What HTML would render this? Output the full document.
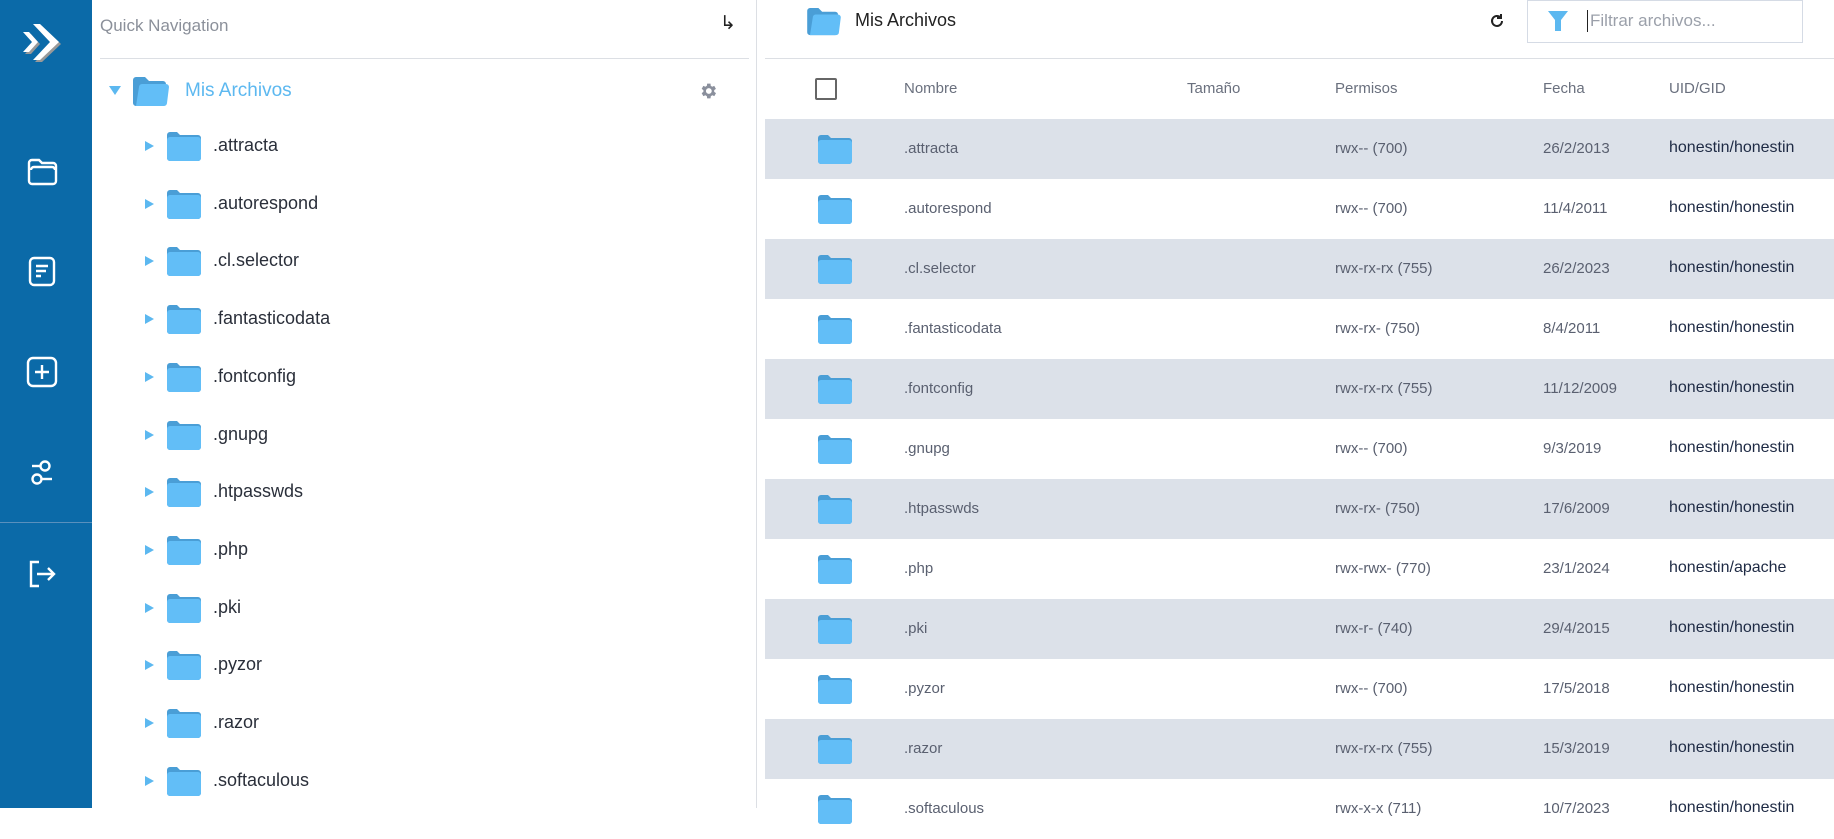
<!DOCTYPE html>
<html><head><meta charset="utf-8"><style>
*{margin:0;padding:0;box-sizing:border-box}
body{width:1834px;height:808px;overflow:hidden;background:#fff;font-family:"Liberation Sans",sans-serif;position:relative}
.sb{position:absolute;left:0;top:0;width:92px;height:808px;background:#0b6aa8}
.sb svg{position:absolute}
.abs{position:absolute}
.tree .row{position:absolute;left:0;height:30px}
.tri{position:absolute;width:0;height:0;border-top:5px solid transparent;border-bottom:5px solid transparent;border-left:9px solid #5cb8f0}
.fold{position:absolute}
.tname{position:absolute;font-size:18px;color:#2a2f3a}
.tr{position:absolute;left:765px;width:1069px;height:60px;font-size:15px;color:#5a6070}
.tr.g{background:#dce1e9}
.tr span{position:absolute;top:21px;white-space:nowrap}
.th span{position:absolute;font-size:15px;color:#6a707e}
</style></head><body>
<div class="sb">
<svg style="left:20px;top:20px" width="44" height="44" viewBox="0 0 44 44">
<g fill="#999" transform="translate(2,2)"><polygon points="13,4 20,4 39,22 20,40 13,40 30,22"/><polygon points="3,12 9,12 18,22 9,32 3,32 12,22"/></g>
<g fill="#fff"><polygon points="13,4 20,4 39,22 20,40 13,40 30,22"/><polygon points="3,12 9,12 18,22 9,32 3,32 12,22"/></g>
</svg>
<svg style="left:27px;top:157px" width="32" height="30" viewBox="0 0 32 30" fill="none" stroke="#fff" stroke-width="2.4"><path d="M2,6 a3,3 0 0 1 3,-3 h7 l3,3 h11 a3,3 0 0 1 3,3 v15 a3,3 0 0 1 -3,3 h-21 a3,3 0 0 1 -3,-3 z"/><path d="M4,13 a3,3 0 0 1 3,-3 h18 a3,3 0 0 1 3,3"/></svg>
<svg style="left:28px;top:256px" width="28" height="32" viewBox="0 0 28 32" fill="none" stroke="#fff" stroke-width="2.4"><rect x="2" y="2" width="24" height="27" rx="4"/><path d="M8,10h12M8,15h10M8,20h5"/></svg>
<svg style="left:26px;top:356px" width="32" height="32" viewBox="0 0 32 32" fill="none" stroke="#fff" stroke-width="2.4"><rect x="2" y="2" width="28" height="28" rx="5"/><path d="M16,9v14M9,16h14"/></svg>
<svg style="left:30px;top:459px" width="26" height="28" viewBox="0 0 26 28" fill="none" stroke="#fff" stroke-width="2.4"><circle cx="15" cy="7" r="4.5"/><path d="M2,7h8"/><circle cx="7" cy="20" r="4.5"/><path d="M12,20h10"/></svg>
<div class="abs" style="left:0;top:522px;width:92px;height:1px;background:#5a90bd"></div>
<svg style="left:28px;top:560px" width="30" height="28" viewBox="0 0 30 28" fill="none" stroke="#fff" stroke-width="2.4"><path d="M11,2h-8v24h8"/><path d="M9,14h17M20,8l6,6l-6,6"/></svg>
</div>

<div class="abs" style="left:100px;top:16px;font-size:17px;color:#8b909a">Quick Navigation</div>
<div class="abs" style="left:720px;top:12px;font-size:19px;color:#222">↳</div>
<div class="abs" style="left:100px;top:58px;width:649px;height:1px;background:#dcdfe4"></div>
<div class="abs" style="left:756px;top:0;width:1px;height:808px;background:#dcdfe4"></div>

<div class="tri" style="left:109px;top:86px;border:none;border-left:6px solid transparent;border-right:6px solid transparent;border-top:9px solid #5cb8f0"></div>
<svg class="fold" style="left:133px;top:77px" width="36" height="30" viewBox="0 0 36 30"><path d="M0,3a3,3 0 0 1 3,-3h9l4,4h14a3,3 0 0 1 3,3v19a3,3 0 0 1 -3,3h-27a3,3 0 0 1 -3,-3z" fill="#4a9ed6"/><path d="M6,10a3,3 0 0 1 3,-3h24a3,3 0 0 1 3,3l-2,16a3,3 0 0 1 -3,3h-28z" fill="#62bef7"/></svg>
<div class="abs" style="left:185px;top:80px;font-size:19px;color:#5cb8f0">Mis Archivos</div>
<svg class="abs" style="left:698px;top:81px" width="20" height="20" viewBox="0 0 24 24"><path fill="#8a8f9c" d="M19.4 13a7.5 7.5 0 0 0 0-2l2.1-1.6-2-3.5-2.5 1a7 7 0 0 0-1.7-1L15 3.2h-4l-.4 2.7a7 7 0 0 0-1.7 1l-2.5-1-2 3.5L6.5 11a7.5 7.5 0 0 0 0 2l-2.1 1.6 2 3.5 2.5-1a7 7 0 0 0 1.7 1l.4 2.7h4l.4-2.7a7 7 0 0 0 1.7-1l2.5 1 2-3.5zM13 15.5a3.5 3.5 0 1 1 0-7 3.5 3.5 0 0 1 0 7z"/></svg>

<div id="tree"></div>

<svg class="fold" style="left:807px;top:8px" width="34" height="28" viewBox="0 0 36 30"><path d="M0,3a3,3 0 0 1 3,-3h9l4,4h14a3,3 0 0 1 3,3v19a3,3 0 0 1 -3,3h-27a3,3 0 0 1 -3,-3z" fill="#4a9ed6"/><path d="M6,10a3,3 0 0 1 3,-3h24a3,3 0 0 1 3,3l-2,16a3,3 0 0 1 -3,3h-28z" fill="#62bef7"/></svg>
<div class="abs" style="left:855px;top:10px;font-size:18px;color:#222">Mis Archivos</div>
<svg class="abs" style="left:1489px;top:13px" width="16" height="16" viewBox="0 0 16 16" fill="none" stroke="#222" stroke-width="2"><path d="M13,8a5,5 0 1 1 -1.5,-3.6"/><path d="M12,1v4h-4" /></svg>
<div class="abs" style="left:1527px;top:0;width:276px;height:43px;border:1px solid #d5dbe5"></div>
<svg class="abs" style="left:1547px;top:10px" width="22" height="22" viewBox="0 0 22 22"><path d="M1,1h20l-7,9v11h-6v-11z" fill="#5cb8f0"/></svg>
<div class="abs" style="left:1587px;top:10px;width:1px;height:22px;background:#222"></div>
<div class="abs" style="left:1590px;top:11px;font-size:17px;color:#9ba0aa">Filtrar archivos...</div>
<div class="abs" style="left:765px;top:58px;width:1069px;height:1px;background:#dcdfe4"></div>

<div class="th">
<div class="abs" style="left:815px;top:78px;width:22px;height:22px;border:2px solid #666;border-radius:2px"></div>
<span style="left:904px;top:80px">Nombre</span>
<span style="left:1187px;top:80px">Tamaño</span>
<span style="left:1335px;top:80px">Permisos</span>
<span style="left:1543px;top:80px">Fecha</span>
<span style="left:1669px;top:80px">UID/GID</span>
</div>
<div id="table"></div>

<script>
var names=[".attracta",".autorespond",".cl.selector",".fantasticodata",".fontconfig",".gnupg",".htpasswds",".php",".pki",".pyzor",".razor",".softaculous"];
var perms=["rwx-- (700)","rwx-- (700)","rwx-rx-rx (755)","rwx-rx- (750)","rwx-rx-rx (755)","rwx-- (700)","rwx-rx- (750)","rwx-rwx- (770)","rwx-r- (740)","rwx-- (700)","rwx-rx-rx (755)","rwx-x-x (711)"];
var dates=["26/2/2013","11/4/2011","26/2/2023","8/4/2011","11/12/2009","9/3/2019","17/6/2009","23/1/2024","29/4/2015","17/5/2018","15/3/2019","10/7/2023"];
var fold='<svg width="34" height="29" viewBox="0 0 34 29"><path d="M0,3a3,3 0 0 1 3,-3h7l3,3h18a3,3 0 0 1 3,3v20a3,3 0 0 1 -3,3h-28a3,3 0 0 1 -3,-3z" fill="#4a9ed6"/><path d="M0,8a3,3 0 0 1 3,-3h28a3,3 0 0 1 3,3v18a3,3 0 0 1 -3,3h-28a3,3 0 0 1 -3,-3z" fill="#62bef7"/></svg>';
var t='',b='';
for(var i=0;i<12;i++){
 var y=146+i*57.7;
 t+='<div class="tri" style="left:145px;top:'+(y-5)+'px"></div><div class="fold" style="left:167px;top:'+(y-14)+'px">'+fold+'</div><div class="tname" style="left:213px;top:'+(y-11)+'px">'+names[i]+'</div>';
 var ry=119+i*60;
 b+='<div class="tr'+(i%2==0?' g':'')+'" style="top:'+ry+'px"><div class="fold" style="left:53px;top:16px">'+fold+'</div><span style="left:139px">'+names[i]+'</span><span style="left:570px">'+perms[i]+'</span><span style="left:778px">'+dates[i]+'</span><span style="left:904px;color:#1e2a44;font-size:16px;top:20px">'+(i==7?'honestin/apache':'honestin/honestin')+'</span></div>';
}
document.getElementById('tree').innerHTML=t;
document.getElementById('table').innerHTML=b;
</script>
</body></html>
